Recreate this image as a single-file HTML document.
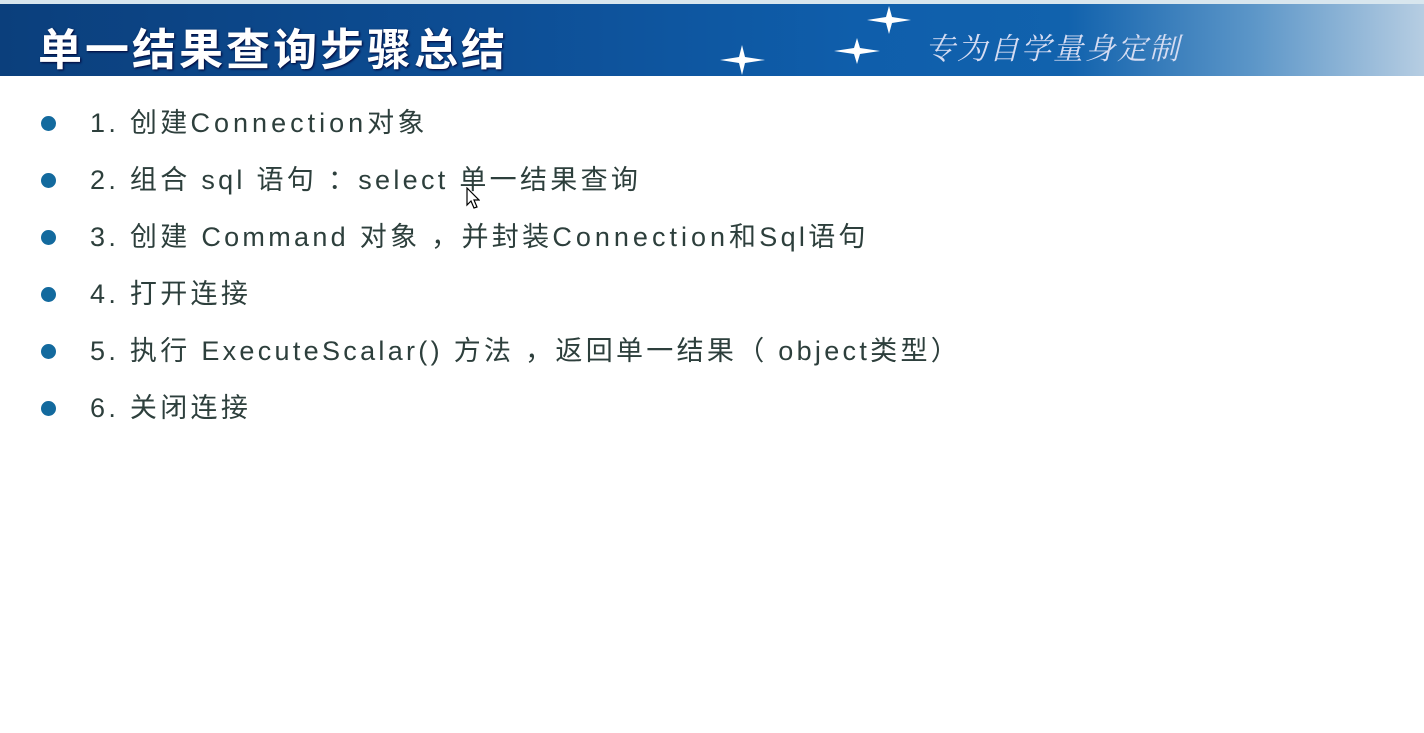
<!DOCTYPE html>
<html><head><meta charset="utf-8"><style>
body{margin:0;width:1424px;height:733px;background:#fff;overflow:hidden;position:relative;font-family:"Liberation Sans","Noto Sans CJK SC",sans-serif}
.top{position:absolute;left:0;top:0;width:1424px;height:4px;background:#d8e6ee}
.ban{position:absolute;left:0;top:4px;width:1424px;height:72px;background:linear-gradient(90deg,#0b3f7c 0%,#0d4e95 35%,#0f5eab 60%,#1162ad 75%,#5c96c8 88%,#b6cde2 100%)}
.ban h1{margin:0;position:absolute;left:38px;top:10px;font-size:44px;font-weight:bold;color:#fff;letter-spacing:3px;font-family:"Liberation Sans","Noto Sans CJK SC",sans-serif;text-shadow:1px 1px 2px #003}
.slog{position:absolute;left:925px;top:20px;font-size:30px;color:#d5dcf2;font-family:"Noto Serif CJK SC",serif;letter-spacing:2px;font-style:italic}
ul{list-style:none;margin:0;padding:0;position:absolute;left:0;top:104px}
li{position:relative;height:57px;padding-left:90px;font-size:27px;color:#2d3f3c;letter-spacing:3.3px;line-height:38px;white-space:nowrap}
li:before{content:"";position:absolute;left:41px;top:12px;width:15px;height:15px;border-radius:50%;background:#136a9e}
.w{letter-spacing:4px}
</style></head><body>
<div class="top"></div>
<div class="ban"><h1>单一结果查询步骤总结</h1>
<svg style="position:absolute;left:0;top:-4px" width="1000" height="80">
<path fill="#fff" d="M742 45 L745 57 L765 60 L745 63 L742 75 L739 63 L720 60 L739 57Z"/>
<path fill="#fff" d="M857 38 L860 48 L880 51 L860 54 L857 64 L854 54 L834 51 L854 48Z"/>
<path fill="#fff" d="M889 6 L892 17 L911 20 L892 23 L889 34 L886 23 L867 20 L886 17Z"/>
</svg>
<div class="slog">专为自学量身定制</div></div>
<ul>
<li>1. 创建<span class="w">Connection</span>对象</li>
<li>2. 组合 sql 语句 ：select 单一结果查询</li>
<li>3. 创建 Command 对象 ，并封装<span class="w">Connection</span>和Sql语句</li>
<li>4. 打开连接</li>
<li>5. 执行 ExecuteScalar() 方法 ，返回单一结果（ object类型）</li>
<li>6. 关闭连接</li>
</ul>
<svg style="position:absolute;left:466px;top:187px" width="14" height="24"><path d="M1 1 L1 18 L5 14 L8 21 L11 20 L8 13 L13 13Z" fill="#fff" stroke="#000" stroke-width="1.2"/></svg>
</body></html>
